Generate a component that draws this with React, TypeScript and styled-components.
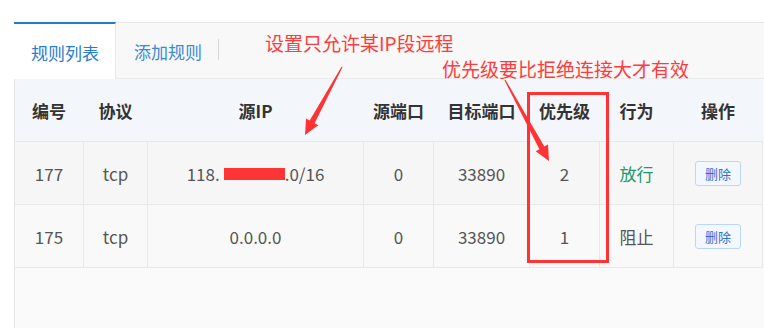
import React from "react";
import styled, { createGlobalStyle } from "styled-components";

const Global = createGlobalStyle`
  html, body { margin: 0; padding: 0; background: #ffffff; }
  body { font-family: "Noto Sans CJK SC", "Noto Sans", sans-serif; }
  * { box-sizing: border-box; }
`;

const Page = styled.div`
  position: relative;
  width: 764px;
  height: 328px;
  padding: 22px 0 0 14px;
  overflow: hidden;
`;

const Panel = styled.div`
  height: 306px;
  border-left: 1px solid #e6e6e6;
  background: #fafafa;
  display: flex;
  flex-direction: column;
`;

const TabBar = styled.div`
  display: flex;
  align-items: stretch;
  height: 57px;
  margin-left: -1px;
  background: #f8f8f8;
  border-top: 1px solid #e8e8e8;
  border-bottom: 1px solid #ececec;
`;

const Tab = styled.div<{ $active?: boolean }>`
  display: flex;
  align-items: center;
  padding: 2px 16px 0 ${(p) => (p.$active ? "17px" : "18px")};
  width: ${(p) => (p.$active ? "102px" : "auto")};
  margin-top: ${(p) => (p.$active ? "-1px" : "0")};
  margin-bottom: ${(p) => (p.$active ? "-1px" : "0")};
  font-size: 17px;
  color: ${(p) => (p.$active ? "#2a7cd0" : "#3c88d4")};
  background: ${(p) => (p.$active ? "#ffffff" : "transparent")};
  border-top: ${(p) => (p.$active ? "2px solid #1f7bd6" : "none")};
  border-right: ${(p) => (p.$active ? "1px solid #e8e8e8" : "none")};
`;

const TabDivider = styled.div`
  width: 1px;
  height: 21px;
  margin-top: 16px;
  background: #d6d6d6;
`;

const Table = styled.div`
  display: flex;
  flex-direction: column;
  width: 748px;
`;

const Row = styled.div<{ $bg: string }>`
  display: grid;
  grid-template-columns: 69px 64px 216px 70px 96px 70px 74px 89px;
  height: 63px;
  background: ${(p) => p.$bg};
  border-bottom: 1px solid #e8e8e8;
`;

const Cell = styled.div<{ $head?: boolean; $color?: string }>`
  display: flex;
  align-items: center;
  justify-content: center;
  font-size: 17px;
  font-weight: ${(p) => (p.$head ? 700 : 400)};
  color: ${(p) => p.$color || (p.$head ? "#333333" : "#555555")};
  border-right: 1px solid ${(p) => (p.$head ? "transparent" : "#e8e8e8")};
  white-space: nowrap;
`;

const Redact = styled.span`
  display: inline-block;
  width: 61px;
  height: 12px;
  background: #ff3535;
  margin: 2px 0 0 4px;
`;

const DeleteButton = styled.button`
  width: 46px;
  height: 25px;
  padding: 0;
  border: 1px solid #b9d7fa;
  border-radius: 3px;
  background: #f3f8ff;
  color: #2e6fd3;
  font-family: "Noto Sans CJK SC", sans-serif;
  font-size: 13px;
  line-height: 23px;
`;

const Note = styled.div<{ $left: number; $top: number }>`
  position: absolute;
  left: ${(p) => p.$left}px;
  top: ${(p) => p.$top}px;
  font-size: 19px;
  line-height: 19px;
  color: #ff3b3b;
  white-space: nowrap;
`;

const RedBox = styled.div`
  position: absolute;
  left: 527px;
  top: 92px;
  width: 82px;
  height: 171px;
  border: 3px solid #ff3333;
`;

const Overlay = styled.svg`
  position: absolute;
  left: 0;
  top: 0;
  pointer-events: none;
`;

function arrowPoints(
  sx: number,
  sy: number,
  tx: number,
  ty: number,
  headLen = 15,
  headHalf = 7,
  s0 = 0.6,
  s1 = 2.8
): string {
  const dx = tx - sx;
  const dy = ty - sy;
  const len = Math.hypot(dx, dy);
  const ux = dx / len;
  const uy = dy / len;
  const nx = -uy;
  const ny = ux;
  const bx = tx - ux * headLen;
  const by = ty - uy * headLen;
  const pts: [number, number][] = [
    [sx + nx * s0, sy + ny * s0],
    [bx + nx * s1, by + ny * s1],
    [bx + nx * headHalf, by + ny * headHalf],
    [tx, ty],
    [bx - nx * headHalf, by - ny * headHalf],
    [bx - nx * s1, by - ny * s1],
    [sx - nx * s0, sy - ny * s0],
  ];
  return pts.map(([x, y]) => `${x.toFixed(1)},${y.toFixed(1)}`).join(" ");
}

const headers = ["编号", "协议", "源IP", "源端口", "目标端口", "优先级", "行为", "操作"];

export default function App() {
  return (
    <Page>
      <Global />
      <Panel>
        <TabBar>
          <Tab $active>规则列表</Tab>
          <Tab>添加规则</Tab>
          <TabDivider />
        </TabBar>
        <Table>
          <Row $bg="#f3f6fa">
            {headers.map((h) => (
              <Cell key={h} $head>
                {h}
              </Cell>
            ))}
          </Row>
          <Row $bg="#f6f6f6">
            <Cell>177</Cell>
            <Cell>tcp</Cell>
            <Cell>
              118.<Redact />.0/16
            </Cell>
            <Cell>0</Cell>
            <Cell>33890</Cell>
            <Cell>2</Cell>
            <Cell $color="#23966a">放行</Cell>
            <Cell>
              <DeleteButton>删除</DeleteButton>
            </Cell>
          </Row>
          <Row $bg="#f9f9f9">
            <Cell>175</Cell>
            <Cell>tcp</Cell>
            <Cell>0.0.0.0</Cell>
            <Cell>0</Cell>
            <Cell>33890</Cell>
            <Cell>1</Cell>
            <Cell>阻止</Cell>
            <Cell>
              <DeleteButton>删除</DeleteButton>
            </Cell>
          </Row>
        </Table>
      </Panel>
      <RedBox />
      <Note $left={265} $top={33}>设置只允许某IP段远程</Note>
      <Note $left={442} $top={59}>优先级要比拒绝连接大才有效</Note>
      <Overlay width={764} height={328} viewBox="0 0 764 328">
        <polygon points={arrowPoints(342, 67, 305, 135)} fill="#ff3333" />
        <polygon points={arrowPoints(505, 80, 549, 161)} fill="#ff3333" />
      </Overlay>
    </Page>
  );
}
